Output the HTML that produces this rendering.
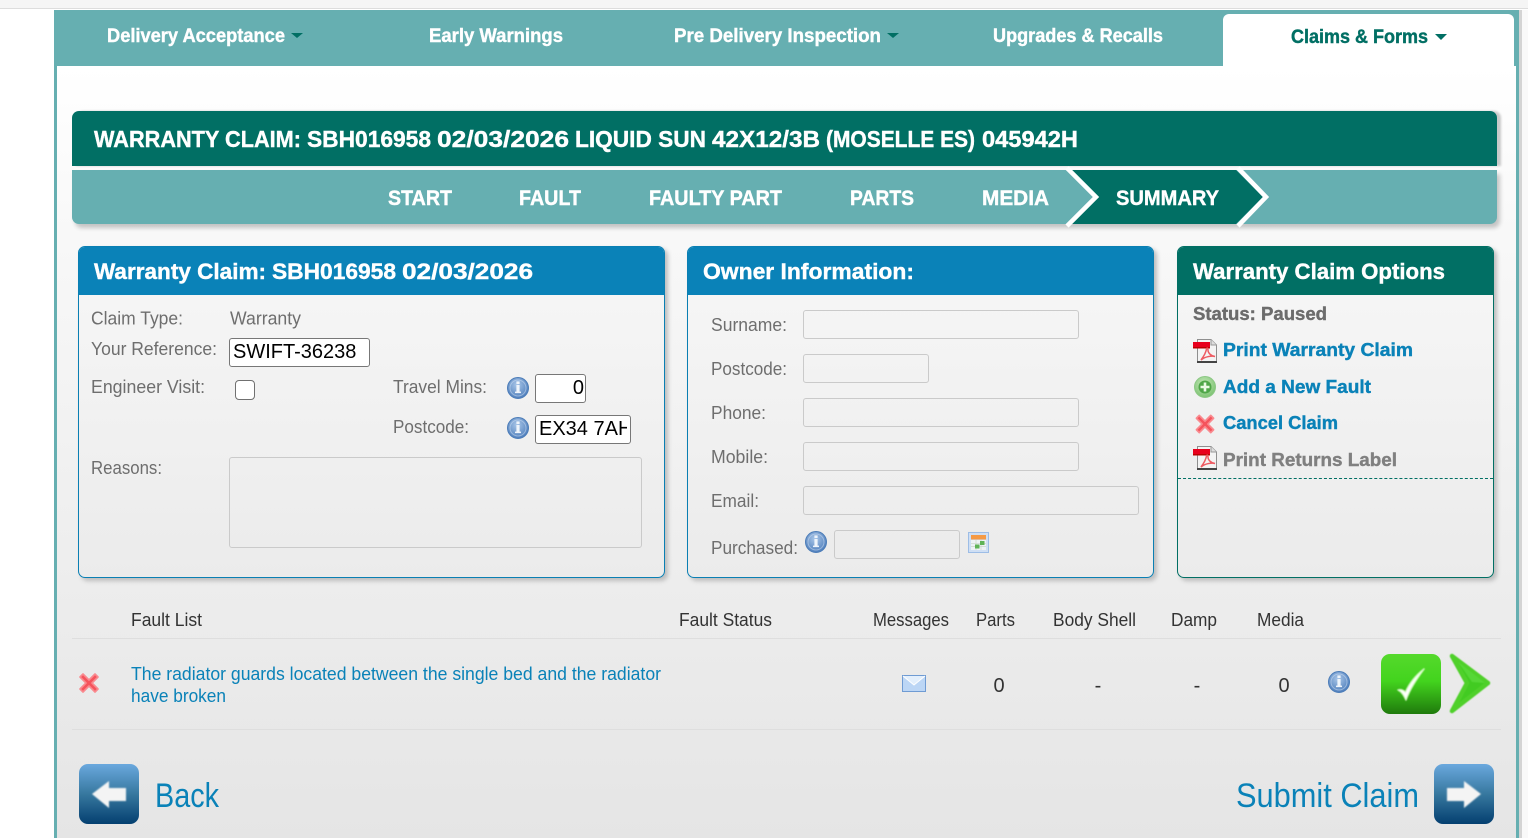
<!DOCTYPE html>
<html lang="en"><head><meta charset="utf-8"><title>Warranty Claim</title>
<style>
html,body{margin:0;padding:0;width:1528px;height:838px;overflow:hidden;background:#fff;font-family:"Liberation Sans",sans-serif}
.a{position:absolute;box-sizing:border-box}
#top{left:0;top:0;width:1528px;height:9px;background:#f5f5f5;border-bottom:1px solid #ddd}
#frame{left:54px;top:10px;width:1465px;height:828px;background:#66afb1}
#shade{left:1519px;top:10px;width:3px;height:828px;background:#d4d4d4}
#rightbg{left:1522px;top:10px;width:6px;height:828px;background:#f9f9f9}
#content{left:57px;top:66px;width:1459px;height:772px;background:linear-gradient(#fff 0,#f8f8f8 170px,#e5e5e5 100%)}
#tab{left:1223px;top:14px;width:291px;height:52px;background:#fff;border-radius:6px 6px 0 0}
#hd{left:72px;top:111px;width:1425px;height:55px;background:#016f64;border-radius:7px 7px 0 0;box-shadow:4px 0 2px #c9c9c9}
#st{left:72px;top:170px;width:1425px;height:54px;background:#66afb1;border-radius:0 0 7px 7px;box-shadow:3px 4px 4px #c4c4c4}
.p{border-radius:7px;box-shadow:3px 3px 4px #bdbdbd;background:linear-gradient(#f7f7f7,#ebebeb);border:1px solid #0a7fb3;overflow:hidden}
.p.g{border-color:#016f64}
.p div{height:49px;margin:-1px -1px 0;background:#0a82b8}
.p.g div{background:#016f64}
input{position:absolute;box-sizing:border-box;margin:0;font:20px "Liberation Sans",sans-serif;color:#000;background:#fff;border:1px solid #777;border-radius:3px;padding:0 3px;outline:0}
.e{position:absolute;box-sizing:border-box;border:1px solid #cacaca;border-radius:3px;background:transparent}
#chk{left:235px;top:380px;width:20px;height:20px;border:1.5px solid #707070;border-radius:4px;background:#fff}
.l{height:1px;background:#dedede;left:72px;width:1429px}
#ds{left:1178px;top:478px;width:315px;border-top:1px dashed #016f64}
svg.o{position:absolute;left:0;top:0}
text{font-family:"Liberation Sans",sans-serif}
.b{font-weight:bold;stroke-width:.4}
</style></head><body>
<div class="a" id="top"></div>
<div class="a" id="frame"></div><div class="a" id="shade"></div><div class="a" id="rightbg"></div>
<div class="a" id="content"></div>
<div class="a" id="tab"></div>
<div class="a" id="hd"></div>
<div class="a" id="st"></div>
<div class="a p" style="left:78px;top:246px;width:587px;height:332px"><div></div></div>
<div class="a p" style="left:687px;top:246px;width:467px;height:332px"><div></div></div>
<div class="a p g" style="left:1177px;top:246px;width:317px;height:332px"><div></div></div>
<div class="a" id="ds"></div>
<div class="a l" style="top:638px"></div>
<div class="a l" style="top:729px"></div>

<input style="left:229px;top:338px;width:141px;height:29px" value="SWIFT-36238">
<input style="left:535px;top:374px;width:51px;height:29px;text-align:right;padding-right:1px" value="0">
<input style="left:535px;top:415px;width:96px;height:29px" value="EX34 7AH">
<div class="a" id="chk"></div>
<div class="e" style="left:229px;top:457px;width:413px;height:91px"></div>
<div class="e" style="left:803px;top:310px;width:276px;height:29px"></div>
<div class="e" style="left:803px;top:354px;width:126px;height:29px"></div>
<div class="e" style="left:803px;top:398px;width:276px;height:29px"></div>
<div class="e" style="left:803px;top:442px;width:276px;height:29px"></div>
<div class="e" style="left:803px;top:486px;width:336px;height:29px"></div>
<div class="e" style="left:834px;top:530px;width:126px;height:29px"></div>

<svg class="o" width="1528" height="838" viewBox="0 0 1528 838" xmlns="http://www.w3.org/2000/svg">
<defs>
<linearGradient id="gb" x1="0" y1="0" x2="0" y2="1"><stop offset="0" stop-color="#6aa8de"/><stop offset=".5" stop-color="#37789f"/><stop offset="1" stop-color="#043f70"/></linearGradient>
<linearGradient id="gg" x1="0" y1="0" x2="0" y2="1"><stop offset="0" stop-color="#55d92c"/><stop offset=".45" stop-color="#43d41e"/><stop offset="1" stop-color="#1f7a0c"/></linearGradient>
<radialGradient id="gi" cx=".45" cy=".35" r=".75"><stop offset="0" stop-color="#a9c6e8"/><stop offset="1" stop-color="#3f72b4"/></radialGradient>
<radialGradient id="gp" cx=".45" cy=".35" r=".75"><stop offset="0" stop-color="#c5e8b8"/><stop offset="1" stop-color="#72bd68"/></radialGradient>
<filter id="bl" x="-20%" y="-20%" width="140%" height="140%"><feGaussianBlur stdDeviation=".7"/></filter>
<filter id="bs" x="-20%" y="-20%" width="140%" height="140%"><feGaussianBlur stdDeviation=".4"/></filter>
<g id="info"><circle r="10.5" fill="url(#gi)" stroke="#4b7cb8"/><circle r="8" fill="none" stroke="#cfe0f3" stroke-opacity=".5"/><rect x="-1.6" y="-3" width="3.2" height="7.5" fill="#eef4fb"/><rect x="-1.6" y="-6.6" width="3.2" height="2.6" fill="#eef4fb"/><rect x="-3" y="3.6" width="6" height="1.5" fill="#eef4fb"/></g>
<g id="pdf"><path d="M4.5 1.5H18L23.5 7V23.5H4.5Z" fill="#f4f4f4" stroke="#8f8f8f"/><path d="M18 1.5V7H23.5" fill="#ddd" stroke="#999"/><path d="M4 23H24V25H4Z" fill="#444"/><rect x="0" y="4" width="17" height="6.5" fill="#e8001c"/><rect x="0" y="9" width="17" height="1.5" fill="#b00"/><path d="M8 22C11 18 13 14 13.5 11C14 9.5 15 10 15 12C15 15 18 18 22 18.5C19 17.5 12 18.5 8 22Z" fill="none" stroke="#ee5b62" stroke-width="1.5"/></g>
<g id="x"><path d="M-7.5-5L-5-7.5L0-2.5L5-7.5L7.5-5L2.5 0L7.5 5L5 7.5L0 2.5L-5 7.5L-7.5 5L-2.5 0Z" fill="#f5535c" stroke="#f98a8f" stroke-width="1.4" stroke-linejoin="round"/></g>
</defs>

<path d="M291 33H303L297 38Z" fill="#016f64"/>
<path d="M887 33H899L893 38Z" fill="#016f64"/>
<path d="M1435 34H1447L1441 40Z" fill="#016f64"/>

<path d="M1071 170H1236L1263 197L1236 224H1071L1097 197Z" fill="#016f64"/>
<path d="M1067 168L1096 197L1067 226M1238 168L1266 197L1238 226" fill="none" stroke="#fff" stroke-width="4.5"/>

<g fill="#fff" stroke="#fff" class="b" font-size="19">
<text x="107" y="42" textLength="178" lengthAdjust="spacingAndGlyphs">Delivery Acceptance</text>
<text x="429" y="42" textLength="134" lengthAdjust="spacingAndGlyphs">Early Warnings</text>
<text x="674" y="42" textLength="207" lengthAdjust="spacingAndGlyphs">Pre Delivery Inspection</text>
<text x="993" y="42" textLength="170" lengthAdjust="spacingAndGlyphs">Upgrades &amp; Recalls</text>
</g>
<text x="1291" y="43" textLength="137" lengthAdjust="spacingAndGlyphs" class="b" font-size="19" fill="#016f64" stroke="#016f64">Claims &amp; Forms</text>

<g fill="#fff" stroke="#fff" class="b" font-size="23">
<text x="94" y="147" textLength="207" lengthAdjust="spacingAndGlyphs">WARRANTY CLAIM:</text>
<text x="307" y="147" textLength="124" lengthAdjust="spacingAndGlyphs">SBH016958</text>
<text x="437" y="147" textLength="132" lengthAdjust="spacingAndGlyphs">02/03/2026</text>
<text x="575" y="147" textLength="131" lengthAdjust="spacingAndGlyphs">LIQUID SUN</text>
<text x="712" y="147" textLength="108" lengthAdjust="spacingAndGlyphs">42X12/3B</text>
<text x="826" y="147" textLength="149" lengthAdjust="spacingAndGlyphs">(MOSELLE ES)</text>
<text x="982" y="147" textLength="96" lengthAdjust="spacingAndGlyphs">045942H</text>
</g>

<g fill="#fff" stroke="#fff" class="b" font-size="21">
<text x="388" y="205" textLength="64" lengthAdjust="spacingAndGlyphs">START</text>
<text x="519" y="205" textLength="62" lengthAdjust="spacingAndGlyphs">FAULT</text>
<text x="649" y="205" textLength="133" lengthAdjust="spacingAndGlyphs">FAULTY PART</text>
<text x="850" y="205" textLength="64" lengthAdjust="spacingAndGlyphs">PARTS</text>
<text x="982" y="205" textLength="67" lengthAdjust="spacingAndGlyphs">MEDIA</text>
<text x="1116" y="205" textLength="103" lengthAdjust="spacingAndGlyphs">SUMMARY</text>
</g>

<g fill="#fff" stroke="#fff" class="b" font-size="22">
<text x="94" y="279" textLength="172" lengthAdjust="spacingAndGlyphs">Warranty Claim:</text>
<text x="272" y="279" textLength="124" lengthAdjust="spacingAndGlyphs">SBH016958</text>
<text x="402" y="279" textLength="131" lengthAdjust="spacingAndGlyphs">02/03/2026</text>
<text x="703" y="279" textLength="211" lengthAdjust="spacingAndGlyphs">Owner Information:</text>
<text x="1193" y="279" textLength="252" lengthAdjust="spacingAndGlyphs">Warranty Claim Options</text>
</g>

<g fill="#6e6e6e" font-size="18.5">
<text x="91" y="324.500" textLength="92" lengthAdjust="spacingAndGlyphs">Claim Type:</text>
<text x="230" y="324.500" textLength="71" lengthAdjust="spacingAndGlyphs">Warranty</text>
<text x="91" y="355" textLength="126" lengthAdjust="spacingAndGlyphs">Your Reference:</text>
<text x="91" y="393" textLength="114" lengthAdjust="spacingAndGlyphs">Engineer Visit:</text>
<text x="393" y="393" textLength="94" lengthAdjust="spacingAndGlyphs">Travel Mins:</text>
<text x="393" y="433" textLength="76" lengthAdjust="spacingAndGlyphs">Postcode:</text>
<text x="91" y="474" textLength="71" lengthAdjust="spacingAndGlyphs">Reasons:</text>
<text x="711" y="331" textLength="76" lengthAdjust="spacingAndGlyphs">Surname:</text>
<text x="711" y="375" textLength="76" lengthAdjust="spacingAndGlyphs">Postcode:</text>
<text x="711" y="419" textLength="55" lengthAdjust="spacingAndGlyphs">Phone:</text>
<text x="711" y="463" textLength="57" lengthAdjust="spacingAndGlyphs">Mobile:</text>
<text x="711" y="507" textLength="48" lengthAdjust="spacingAndGlyphs">Email:</text>
<text x="711" y="554" textLength="87" lengthAdjust="spacingAndGlyphs">Purchased:</text>
</g>

<text x="1193" y="320" textLength="134" lengthAdjust="spacingAndGlyphs" class="b" font-size="18.5" fill="#6c6c6c" stroke="#6c6c6c">Status: Paused</text>
<g fill="#0a82b8" stroke="#0a82b8" class="b" font-size="18.5">
<text x="1223" y="356" textLength="190" lengthAdjust="spacingAndGlyphs">Print Warranty Claim</text>
<text x="1223" y="393" textLength="148" lengthAdjust="spacingAndGlyphs">Add a New Fault</text>
<text x="1223" y="429" textLength="115" lengthAdjust="spacingAndGlyphs">Cancel Claim</text>
</g>
<text x="1223" y="466" textLength="174" lengthAdjust="spacingAndGlyphs" class="b" font-size="18.5" fill="#808080" stroke="#808080">Print Returns Label</text>

<use href="#pdf" x="1193" y="338"/>
<use href="#pdf" x="1193" y="445"/>
<g transform="translate(1205,387)"><circle r="10.5" fill="url(#gp)" stroke="#8cc884"/><circle r="6.5" fill="#4fa648"/><path d="M-4.5-1.3H-1.3V-4.5H1.3V-1.3H4.5V1.3H1.3V4.5H-1.3V1.3H-4.5Z" fill="#eaf9e4"/></g>
<use href="#x" x="0" y="0" transform="translate(1205,424) scale(1.15)"/>
<use href="#info" transform="translate(518,388)"/>
<use href="#info" transform="translate(518,428)"/>
<use href="#info" transform="translate(816,542)"/>
<use href="#info" transform="translate(1339,682)"/>

<g transform="translate(968,532)"><rect x=".5" y=".5" width="20" height="20" fill="#cfdff4" stroke="#9dbde6"/><rect x="3" y="3" width="15" height="4.5" fill="#f59a45"/><rect x="3" y="8" width="15" height="10" fill="#eef2f6"/><path d="M3 11.3H18M3 14.6H18M8 8V18M13 8V18" stroke="#c9d6c9" stroke-width=".7"/><rect x="12" y="9" width="4.5" height="4" fill="#5fb357"/><rect x="7" y="12.5" width="4.5" height="4" fill="#5fb357"/></g>

<g fill="#333" font-size="18.5">
<text x="131" y="626" textLength="71" lengthAdjust="spacingAndGlyphs">Fault List</text>
<text x="679" y="626" textLength="93" lengthAdjust="spacingAndGlyphs">Fault Status</text>
<text x="873" y="626" textLength="76" lengthAdjust="spacingAndGlyphs">Messages</text>
<text x="976" y="626" textLength="39" lengthAdjust="spacingAndGlyphs">Parts</text>
<text x="1053" y="626" textLength="83" lengthAdjust="spacingAndGlyphs">Body Shell</text>
<text x="1171" y="626" textLength="46" lengthAdjust="spacingAndGlyphs">Damp</text>
<text x="1257" y="626" textLength="47" lengthAdjust="spacingAndGlyphs">Media</text>
</g>
<use href="#x" transform="translate(89,683) scale(1.2)"/>
<g fill="#0a82b8" font-size="18.5">
<text x="131" y="680" textLength="530" lengthAdjust="spacingAndGlyphs">The radiator guards located between the single bed and the radiator</text>
<text x="131" y="702" textLength="95" lengthAdjust="spacingAndGlyphs">have broken</text>
</g>
<g transform="translate(902,675)"><rect x=".5" y=".5" width="23" height="16" fill="#bcd6f5" stroke="#6f9bd3"/><path d="M1 1L12 10L23 1" fill="#e3effc" stroke="#fff"/></g>
<g fill="#333" font-size="20" text-anchor="middle">
<text x="999" y="692">0</text><text x="1098" y="692">-</text><text x="1197" y="692">-</text><text x="1284" y="692">0</text>
</g>

<rect x="1381" y="654" width="60" height="60" rx="9" fill="url(#gg)"/>
<path d="M1398 690C1402 692 1404 696 1406 700C1410 689 1416 680 1424 669C1415 676 1409 684 1405.500 692C1403 690 1401 689 1398 690Z" fill="#fff" stroke="#e0ffd0" stroke-opacity=".7" stroke-width="1.8" stroke-linejoin="round" filter="url(#bs)"/>
<path d="M1452 656L1488 683L1452 711L1467 683Z" fill="#43cb22" stroke="#4fd02c" stroke-width="4.500" stroke-linejoin="round" filter="url(#bs)"/>
<path d="M1458 662L1485 683L1472 682Z" fill="#5fdd40" opacity=".7" filter="url(#bs)"/>

<rect x="79" y="764" width="60" height="60" rx="9" fill="url(#gb)"/>
<path d="M92 794L109 781V788H126V801H109V808Z" fill="#f4f4f4" filter="url(#bl)"/>
<text x="155" y="807" textLength="64" lengthAdjust="spacingAndGlyphs" font-size="34" fill="#0a82b8">Back</text>
<text x="1236" y="807" textLength="183" lengthAdjust="spacingAndGlyphs" font-size="34" fill="#0a82b8">Submit Claim</text>
<rect x="1434" y="764" width="60" height="60" rx="9" fill="url(#gb)"/>
<path d="M1481 794L1464 781V788H1447V801H1464V808Z" fill="#f4f4f4" filter="url(#bl)"/>
</svg>
</body></html>
